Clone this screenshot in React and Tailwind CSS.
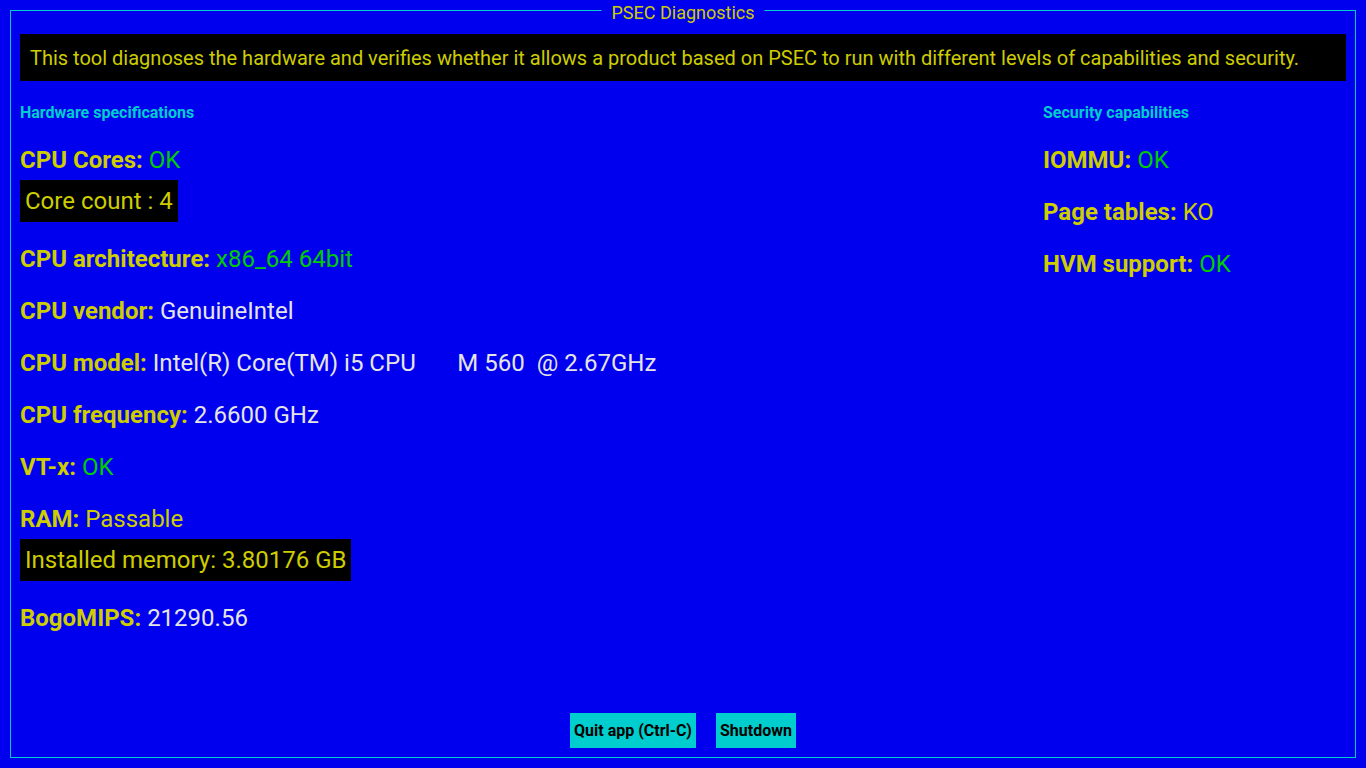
import React from 'react';

const hardware = [
  { label: 'CPU Cores:', value: 'OK', tone: 'ok', detail: 'Core count : 4' },
  { label: 'CPU architecture:', value: 'x86_64 64bit', tone: 'ok' },
  { label: 'CPU vendor:', value: 'GenuineIntel', tone: 'info' },
  { label: 'CPU model:', value: 'Intel(R) Core(TM) i5 CPU       M 560  @ 2.67GHz', tone: 'info' },
  { label: 'CPU frequency:', value: '2.6600 GHz', tone: 'info' },
  { label: 'VT-x:', value: 'OK', tone: 'ok' },
  { label: 'RAM:', value: 'Passable', tone: 'warn', detail: 'Installed memory: 3.80176 GB' },
  { label: 'BogoMIPS:', value: '21290.56', tone: 'info' },
];

const security = [
  { label: 'IOMMU:', value: 'OK', tone: 'ok' },
  { label: 'Page tables:', value: 'KO', tone: 'warn' },
  { label: 'HVM support:', value: 'OK', tone: 'ok' },
];

const toneClass = {
  ok: 'text-[#00cd00]',
  warn: 'text-[#cdcd00]',
  info: 'text-[#e5e5e5]',
};

const Item = ({ item }) => (
  <div>
    <div className="text-[24px] leading-[28px] whitespace-pre">
      <span className="font-bold text-[#cdcd00]">{item.label}</span>{' '}
      <span className={toneClass[item.tone]}>{item.value}</span>
    </div>
    {item.detail && (
      <div className="mt-[6px] mb-[-1px] w-fit bg-black px-[5px] py-[7px] text-[24px] leading-[28px] text-[#cdcd00]">
        {item.detail}
      </div>
    )}
  </div>
);

const App = () => {
  return (
    <div
      className="w-[1366px] h-[768px] bg-[#0000ee] p-[10px] overflow-hidden"
      style={{ fontFamily: 'Roboto, "Liberation Sans", sans-serif' }}
    >
      <div className="relative h-full border border-[#00cdcd] px-[9px] pt-[23px] pb-[9px] flex flex-col">
        {/* Title on the border */}
        <div className="absolute top-[-8px] left-1/2 -translate-x-1/2 bg-[#0000ee] px-[10px] text-[18px] leading-[20px] text-[#cdcd00] whitespace-nowrap">
          PSEC Diagnostics
        </div>

        {/* Intro */}
        <div className="bg-black px-[10px] pt-[13px] pb-[11px] text-[20px] leading-[23px] text-[#cdcd00]">
          This tool diagnoses the hardware and verifies whether it allows a product based on PSEC to run with different levels of capabilities and security.
        </div>

        {/* Columns */}
        <div className="flex mt-[23px] flex-1">
          <div className="flex-1">
            <h3 className="text-[16px] leading-[18px] font-bold text-[#00cdcd]">Hardware specifications</h3>
            <div className="mt-[24px] flex flex-col gap-[24px]">
              {hardware.map((item) => (
                <Item key={item.label} item={item} />
              ))}
            </div>
          </div>
          <div className="w-[303px]">
            <h3 className="text-[16px] leading-[18px] font-bold text-[#00cdcd]">Security capabilities</h3>
            <div className="mt-[24px] flex flex-col gap-[24px]">
              {security.map((item) => (
                <Item key={item.label} item={item} />
              ))}
            </div>
          </div>
        </div>

        {/* Actions */}
        <div className="flex justify-center gap-[20px]">
          <button className="h-[35px] bg-[#00cdcd] px-[4px] text-[16px] font-bold text-black">
            Quit app (Ctrl-C)
          </button>
          <button className="h-[35px] bg-[#00cdcd] px-[4px] text-[16px] font-bold text-black">
            Shutdown
          </button>
        </div>
      </div>
    </div>
  );
};

export default App;
